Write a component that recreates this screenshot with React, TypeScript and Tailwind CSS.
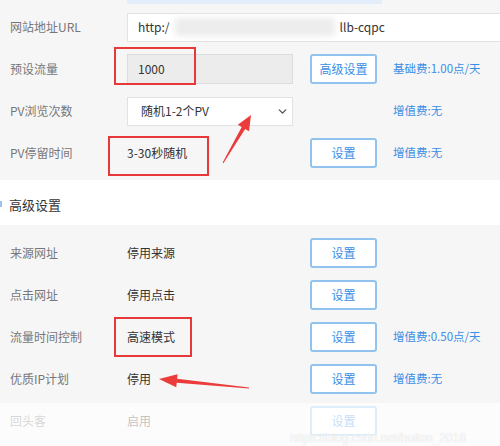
import React from 'react';
import { ChevronDown } from 'lucide-react';

type Pt = [number, number];

// tapered arrow polygon from tail to tip
const arrowPoints = (tail: Pt, tip: Pt, headLen: number, headW: number, tailW: number, neckW: number) => {
  const dx = tip[0] - tail[0];
  const dy = tip[1] - tail[1];
  const len = Math.hypot(dx, dy);
  const ux = dx / len;
  const uy = dy / len;
  const nx = -uy;
  const ny = ux;
  const neck: Pt = [tip[0] - ux * headLen, tip[1] - uy * headLen];
  const p = (b: Pt, w: number) => `${b[0] + nx * w},${b[1] + ny * w}`;
  return [
    p(tail, tailW / 2),
    p(neck, neckW / 2),
    p(neck, headW / 2),
    `${tip[0]},${tip[1]}`,
    p(neck, -headW / 2),
    p(neck, -neckW / 2),
    p(tail, -tailW / 2),
  ].join(' ');
};

const font = { fontFamily: '"Noto Sans CJK SC", "Noto Sans", sans-serif' };

const SetButton = ({ label = '设置' }: { label?: string }) => (
  <button className="w-[67px] h-[30px] rounded-[3px] border-2 border-[#92c3ef] bg-white text-[12px] text-[#3a8ee6] flex items-center justify-center">
    {label}
  </button>
);

const Row = ({
  label,
  children,
  button,
  fee,
}: {
  label: string;
  children?: React.ReactNode;
  button?: string | null;
  fee?: string;
}) => (
  <div className="flex items-center h-[42px]">
    <div className="w-[127px] pl-[10px] text-[12px] text-[#777]">{label}</div>
    <div className="w-[183px] flex items-center">{children}</div>
    <div className="w-[83px] flex items-center">{button ? <SetButton label={button} /> : null}</div>
    <div className="text-[11.5px] text-[#3a8ee6]">{fee}</div>
  </div>
);

export default function App() {
  return (
    <div className="relative w-[500px] h-[446px] overflow-hidden bg-[#f6f6f7]" style={font}>
      {/* top strip */}
      <div className="absolute top-0 left-[127px] w-[255px] h-[4px] bg-[#e4eefa]" />

      <div className="pt-[6px]">
        <Row label="网站地址URL">
          <div className="w-[380px] h-[29px] bg-white border border-[#e2e2e2] flex items-center pl-[10px] text-[12px] text-[#333] shrink-0">
            <span>http:/</span>
            <div className="w-[160px] h-[18px] mx-[5px] bg-[#ececed] blur-[3px] rounded" />
            <span>llb-cqpc</span>
          </div>
        </Row>
        <Row label="预设流量" button="高级设置" fee="基础费:1.00点/天">
          <div className="w-[166px] h-[30px] bg-[#ececec] border border-[#dcdcdc] flex items-center pl-[10px] text-[12px] text-[#333]">
            1000
          </div>
        </Row>
        <Row label="PV浏览次数" fee="增值费:无">
          <div className="w-[166px] h-[29px] bg-white border border-[#e2e2e2] flex items-center justify-between pl-[13px] pr-[3px] text-[12px] text-[#333]">
            <span>随机1-2个PV</span>
            <ChevronDown className="w-[13px] h-[13px] text-[#555]" strokeWidth={2.5} />
          </div>
        </Row>
        <Row label="PV停留时间" button="设置" fee="增值费:无">
          <span className="text-[12px] text-[#333]">3-30秒随机</span>
        </Row>
      </div>

      {/* section header */}
      <div className="mt-[6px] h-[45px] bg-white flex items-center pl-[9px] pt-[4px]">
        <span className="text-[13px] text-[#333]">高级设置</span>
      </div>
      <div className="absolute left-0 top-[201px] w-[2px] h-[6px] bg-[#9cc4ea]" />

      <div className="pt-[7px]">
        <Row label="来源网址" button="设置">
          <span className="text-[12px] text-[#333]">停用来源</span>
        </Row>
        <Row label="点击网址" button="设置">
          <span className="text-[12px] text-[#333]">停用点击</span>
        </Row>
        <Row label="流量时间控制" button="设置" fee="增值费:0.50点/天">
          <span className="text-[12px] text-[#333]">高速模式</span>
        </Row>
        <Row label="优质IP计划" button="设置" fee="增值费:无">
          <span className="text-[12px] text-[#333]">停用</span>
        </Row>
        <Row label="回头客" button="设置">
          <span className="text-[12px] text-[#333]">启用</span>
        </Row>
      </div>

      {/* faded bottom */}
      <div className="absolute left-0 right-0 top-[403px] bottom-0 bg-white/70" />
      <div className="absolute left-[290px] top-[431px] text-[12px] leading-[14px] text-white/90 [text-shadow:0_0_1px_#ccc]" style={{ fontFamily: '"Liberation Sans", sans-serif' }}>
        https://blog.csdn.net/huilan_2018
      </div>

      {/* red annotation boxes */}
      <div className="absolute left-[114px] top-[47px] w-[82px] h-[38px] border-2 border-[#e8393a]" />
      <div className="absolute left-[108px] top-[136px] w-[101px] h-[40px] border-2 border-[#e8393a]" />
      <div className="absolute left-[114px] top-[317px] w-[78px] h-[40px] border-2 border-[#e8393a]" />

      {/* arrows */}
      <svg className="absolute inset-0" width={500} height={446}>
        <polygon points={arrowPoints([223, 163], [251, 115], 15, 13, 1, 4)} fill="#ec3b3b" />
        <polygon points={arrowPoints([249, 388], [159, 379], 18, 13, 1, 4)} fill="#ec3b3b" />
      </svg>
    </div>
  );
}
